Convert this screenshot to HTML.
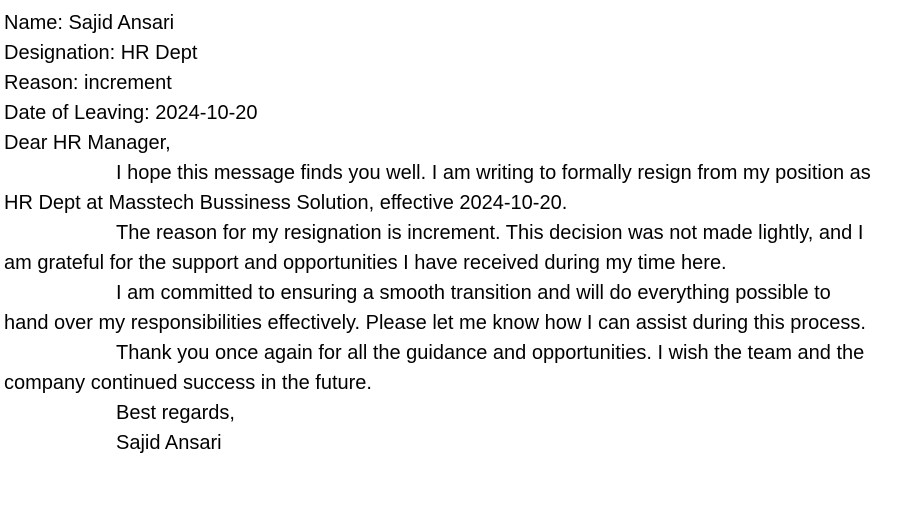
<!DOCTYPE html>
<html><head><meta charset="utf-8"><style>
html,body{margin:0;padding:0;background:#fff;}
body{width:901px;height:511px;overflow:hidden;font-family:"Liberation Sans",Arial,sans-serif;font-size:20px;line-height:30px;color:#000;padding-top:8px;box-sizing:border-box;}
div{white-space:nowrap;padding-left:4px;}
.i{padding-left:116px;}
</style></head><body>
<div>Name: Sajid Ansari</div>
<div>Designation: HR Dept</div>
<div>Reason: increment</div>
<div>Date of Leaving: 2024-10-20</div>
<div>Dear HR Manager,</div>
<div class="i">I hope this message finds you well. I am writing to formally resign from my position as</div>
<div>HR Dept at Masstech Bussiness Solution, effective 2024-10-20.</div>
<div class="i">The reason for my resignation is increment. This decision was not made lightly, and I</div>
<div>am grateful for the support and opportunities I have received during my time here.</div>
<div class="i">I am committed to ensuring a smooth transition and will do everything possible to</div>
<div>hand over my responsibilities effectively. Please let me know how I can assist during this process.</div>
<div class="i">Thank you once again for all the guidance and opportunities. I wish the team and the</div>
<div>company continued success in the future.</div>
<div class="i">Best regards,</div>
<div class="i">Sajid Ansari</div>
</body></html>
